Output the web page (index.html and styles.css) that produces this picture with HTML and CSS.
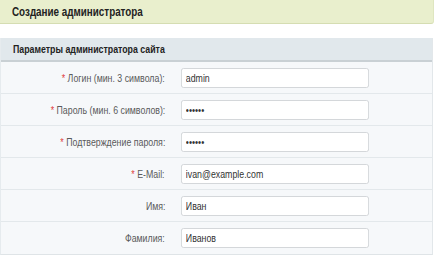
FILE: index.html
```html
<!DOCTYPE html>
<html lang="ru">
<head>
    <meta charset="UTF-8">
    <title>Создание администратора</title>
    <link rel="stylesheet" href="styles.css">
</head>
<body>
    <div class="page-title"><span class="narrow">Создание администратора</span></div>

    <div class="params">
        <div class="params-head"><span class="narrow">Параметры администратора сайта</span></div>

        <div class="row">
            <label class="label"><span class="narrow"><span class="req">*</span> Логин (мин. 3 символа):</span></label>
            <input class="field" type="text" value="admin">
        </div>
        <div class="row">
            <label class="label"><span class="narrow"><span class="req">*</span> Пароль (мин. 6 символов):</span></label>
            <input class="field" type="password" value="123456">
        </div>
        <div class="row">
            <label class="label"><span class="narrow"><span class="req">*</span> Подтверждение пароля:</span></label>
            <input class="field" type="password" value="123456">
        </div>
        <div class="row">
            <label class="label"><span class="narrow"><span class="req">*</span> E-Mail:</span></label>
            <input class="field" type="text" value="ivan@example.com">
        </div>
        <div class="row">
            <label class="label"><span class="narrow">Имя:</span></label>
            <input class="field" type="text" value="Иван">
        </div>
        <div class="row">
            <label class="label"><span class="narrow">Фамилия:</span></label>
            <input class="field" type="text" value="Иванов">
        </div>
    </div>
</body>
</html>
```

FILE: styles.css
```css
* {
    margin: 0;
    padding: 0;
    box-sizing: border-box;
}

body {
    font-family: "Liberation Sans", Arial, sans-serif;
    background: #fff;
    width: 434px;
}

/* текст в оригинале заметно уже обычного Arial */
.narrow {
    display: inline-block;
    transform: scaleX(0.8);
    transform-origin: left center;
    white-space: nowrap;
}

.page-title {
    height: 24px;
    background: #e9efcd;
    border-bottom: 1px solid #d5ddb2;
    border-right: 1px solid #dfe6c0;
    border-radius: 0 0 3px 0;
    padding: 5px 12px 0;
    font-size: 12px;
    font-weight: bold;
    color: #222;
    margin-bottom: 14px;
}

.page-title .narrow {
    transform: scaleX(0.82);
}

.params {
    width: 433px;
    border-left: 1px solid #e6ebee;
    border-right: 1px solid #e2e7ea;
    border-bottom: 1px solid #dfe4e7;
}

.params-head {
    height: 24px;
    background: #e1e8ec;
    border-bottom: 2px solid #c9d0d4;
    padding: 5px 12px 0;
    font-size: 11px;
    font-weight: bold;
    color: #222;
}

.row {
    display: flex;
    align-items: center;
    height: 32px;
    background: #f6f8fa;
    border-bottom: 1px solid #e3e8eb;
}

.row:last-child {
    border-bottom: none;
}

.label {
    width: 164px;
    text-align: right;
    font-size: 11px;
    color: #5a5a5a;
}

.label .narrow {
    transform-origin: right center;
}

.req {
    color: #e03a3a;
}

.field {
    margin-left: 16px;
    width: 235px;
    height: 20px;
    border: 1px solid #cfd3d6;
    border-radius: 3px;
    background: #fff;
    padding: 0 5px;
    font-family: "Liberation Sans", Arial, sans-serif;
    font-size: 11px;
    color: #333;
    outline: none;
    transform: scaleX(0.8);
    transform-origin: left center;
}
```
